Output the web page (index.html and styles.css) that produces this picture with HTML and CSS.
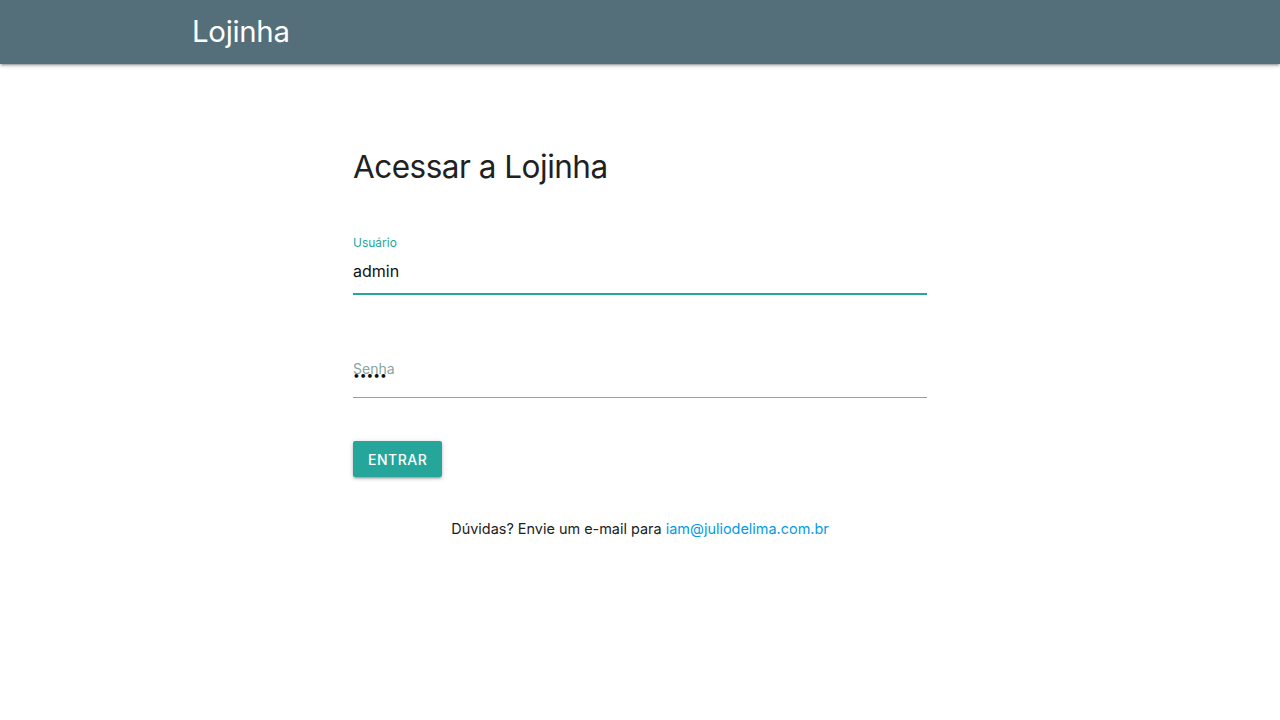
FILE: index.html
```html
<!DOCTYPE html>
<html lang="pt-BR">
<head>
<meta charset="utf-8">
<title>Lojinha</title>
<link rel="stylesheet" href="styles.css">
</head>
<body>
<nav class="navbar">
  <div class="container">
    <a class="brand" href="#">Lojinha</a>
  </div>
</nav>
<main class="main">
  <form class="login">
    <h4 class="title">Acessar a Lojinha</h4>
    <div class="field field-active">
      <label class="label-active" for="usuario">Usuário</label>
      <input class="input input-focus" id="usuario" type="text" value="admin">
    </div>
    <div class="field field-pass">
      <input class="input" id="senha" type="password" value="admin">
      <label class="label-float" for="senha">Senha</label>
    </div>
    <button class="btn" type="button">Entrar</button>
    <p class="help">Dúvidas? Envie um e-mail para <a class="link" href="#">iam@juliodelima.com.br</a></p>
  </form>
</main>
</body>
</html>
```
FILE: styles.css
```css
* { box-sizing: border-box; }
body {
  margin: 0;
  font-family: Inter, "Noto Sans", Roboto, sans-serif;
  color: rgba(0,0,0,0.87);
  background: #fff;
}
.navbar {
  height: 64px;
  background: #546e7a;
  box-shadow: 0 2px 2px 0 rgba(0,0,0,0.14), 0 3px 1px -2px rgba(0,0,0,0.12), 0 1px 5px 0 rgba(0,0,0,0.2);
}
.container {
  width: 70%;
  margin: 0 auto;
}
.brand {
  display: inline-block;
  color: #fff;
  text-decoration: none;
  font-size: 29.4px;
  line-height: 64px;
  letter-spacing: -0.3px;
}
.main {
  padding-top: 85px;
}
.login {
  width: 574px;
  margin: 0 auto;
  display: flex;
  flex-direction: column;
  align-items: flex-start;
}
.title {
  margin: 0;
  font-size: 31.5px;
  font-weight: 400;
  line-height: 36px;
  color: #212121;
  letter-spacing: -0.5px;
}
.field {
  position: relative;
  width: 100%;
}
.field-active {
  margin-top: 50px;
  display: flex;
  flex-direction: column;
}
.label-active {
  font-size: 12px;
  line-height: 16px;
  color: #26a69a;
}
.input {
  width: 100%;
  height: 45px;
  border: none;
  border-bottom: 1px solid #9e9e9e;
  outline: none;
  padding: 0;
  font-family: inherit;
  font-size: 16px;
  color: #111;
  background: transparent;
}
.input-focus {
  margin-top: -2px;
  border-bottom-color: #26a69a;
  box-shadow: 0 1px 0 0 #26a69a;
}
.field-pass {
  margin-top: 55px;
}
.field-pass .input {
  height: 49px;
  font-size: 12px;
  letter-spacing: 0;
  padding-top: 3px;
}
.label-float {
  position: absolute;
  left: 0;
  top: 12px;
  font-size: 14px;
  line-height: 16px;
  color: #88a5a1;
  pointer-events: none;
}
.btn {
  margin-top: 43px;
  height: 36px;
  padding: 0 15px;
  border: none;
  border-radius: 2px;
  background: #26a69a;
  color: #fff;
  font-family: inherit;
  font-size: 14px;
  font-weight: 500;
  letter-spacing: 0.5px;
  text-transform: uppercase;
  box-shadow: 0 2px 2px 0 rgba(0,0,0,0.14), 0 3px 1px -2px rgba(0,0,0,0.12), 0 1px 5px 0 rgba(0,0,0,0.2);
}
.help {
  align-self: center;
  margin: 41px 0 0;
  font-size: 14.45px;
  line-height: 22px;
  color: #212121;
}
.link {
  color: #039be5;
  text-decoration: none;
}
```
